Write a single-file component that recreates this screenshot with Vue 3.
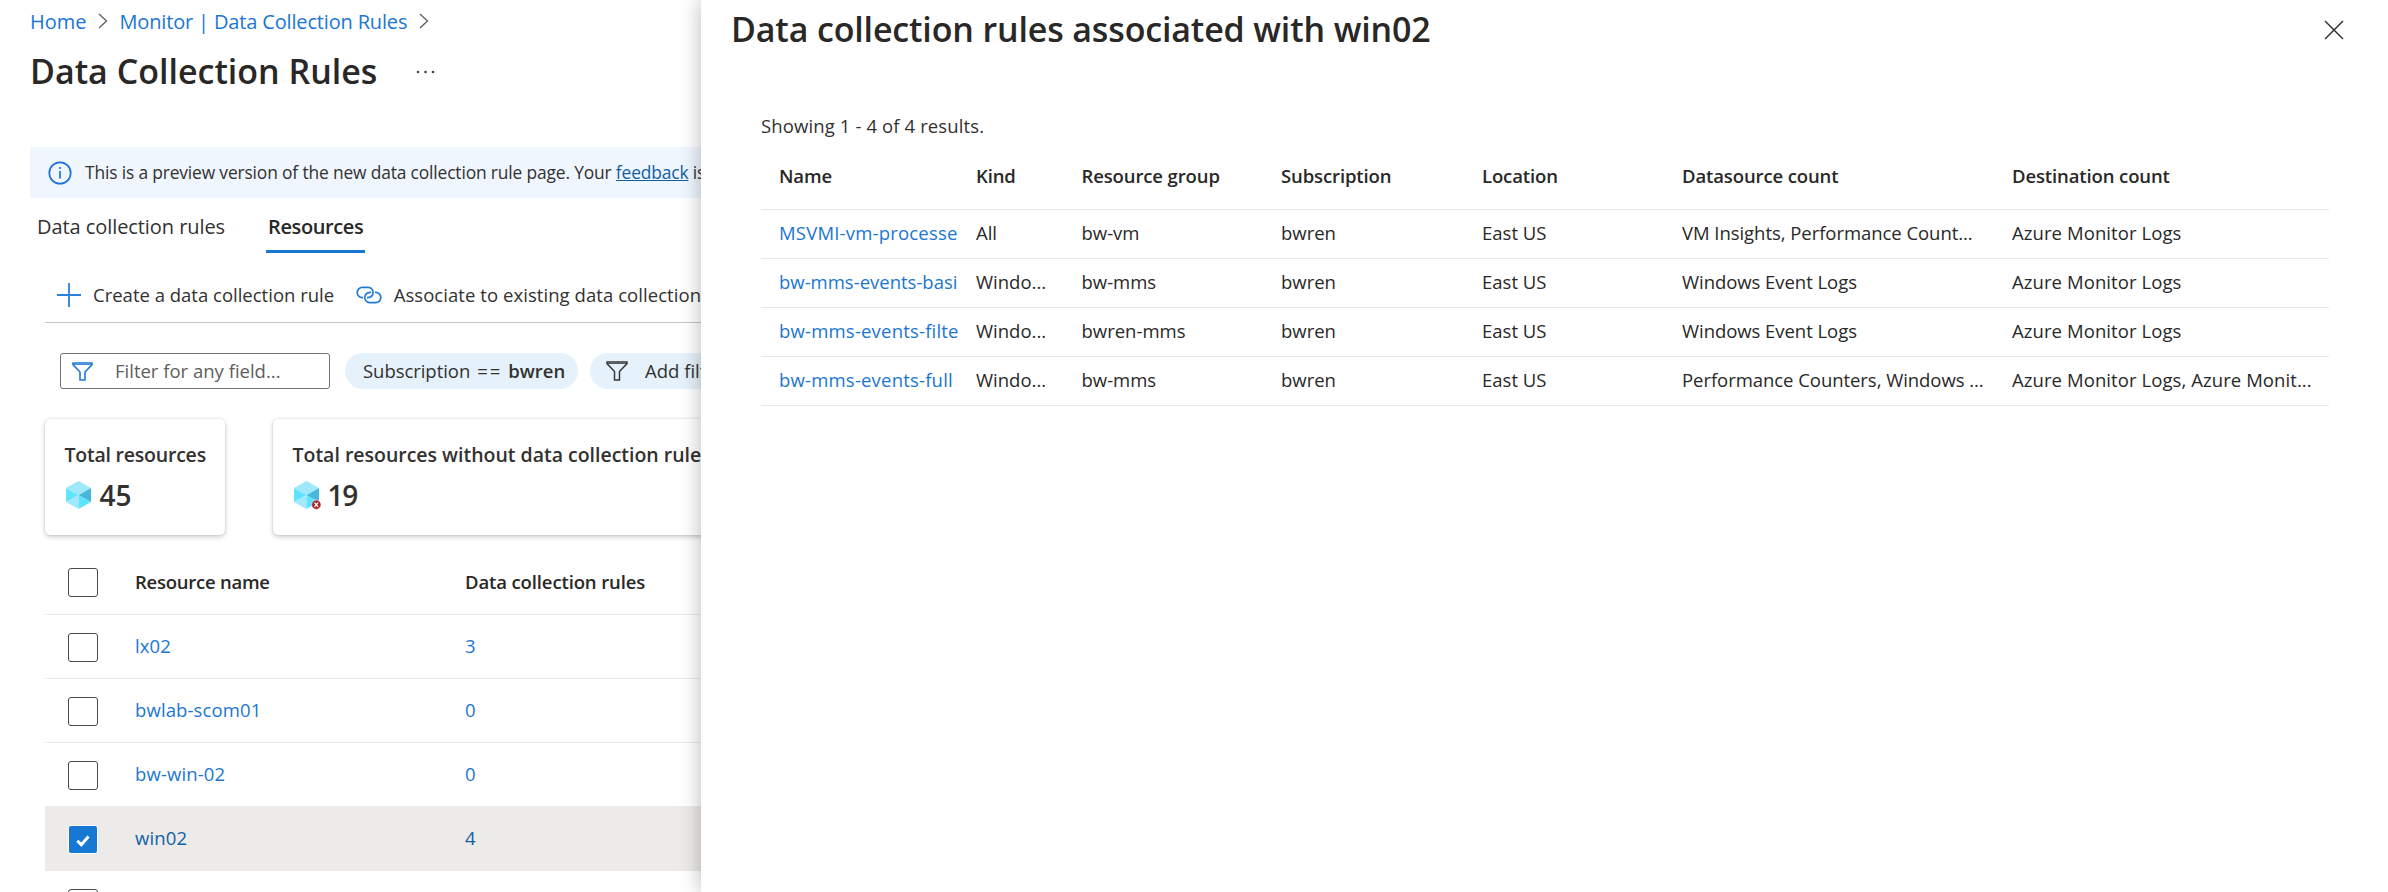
<script setup>
const resources = [
  { name: 'lx02', rules: 3, selected: false },
  { name: 'bwlab-scom01', rules: 0, selected: false },
  { name: 'bw-win-02', rules: 0, selected: false },
  { name: 'win02', rules: 4, selected: true },
  { name: '', rules: '', selected: false },
]

const columns = ['Name', 'Kind', 'Resource group', 'Subscription', 'Location', 'Datasource count', 'Destination count']

const rules = [
  ['MSVMI-vm-processe', 'All', 'bw-vm', 'bwren', 'East US', 'VM Insights, Performance Count...', 'Azure Monitor Logs'],
  ['bw-mms-events-basi', 'Windo...', 'bw-mms', 'bwren', 'East US', 'Windows Event Logs', 'Azure Monitor Logs'],
  ['bw-mms-events-filte', 'Windo...', 'bwren-mms', 'bwren', 'East US', 'Windows Event Logs', 'Azure Monitor Logs'],
  ['bw-mms-events-full', 'Windo...', 'bw-mms', 'bwren', 'East US', 'Performance Counters, Windows ...', 'Azure Monitor Logs, Azure Monit...'],
]
</script>

<template>
  <div class="portal">
    <main class="blade">
      <nav class="crumbs">
        <a>Home</a>
        <svg class="chev" width="10" height="16" viewBox="0 0 10 16"><path d="M1 1l7.5 7L1 15" /></svg>
        <a class="monitor">Monitor | Data Collection Rules</a>
        <svg class="chev" width="10" height="16" viewBox="0 0 10 16"><path d="M1 1l7.5 7L1 15" /></svg>
      </nav>
      <header class="head">
        <h1>Data Collection Rules</h1>
        <svg class="dots" width="20" height="4" viewBox="0 0 20 4"><circle cx="2" cy="2" r="1.3" /><circle cx="9.5" cy="2" r="1.3" /><circle cx="17" cy="2" r="1.3" /></svg>
      </header>

      <div class="banner">
        <svg width="24" height="24" viewBox="0 0 24 24" fill="none" stroke="#1f6fe0" stroke-width="1.7">
          <circle cx="12" cy="12" r="10.7" /><path d="M12 10v7.5" /><circle cx="12" cy="7" r="1.1" fill="#1f6fe0" stroke="none" />
        </svg>
        <span>This is a preview version of the new data collection rule page. Your <a>feedback</a> is</span>
      </div>

      <div class="tabs">
        <span class="tab">Data collection rules</span>
        <span class="tab active">Resources</span>
      </div>

      <div class="toolbar">
        <svg width="24" height="24" viewBox="0 0 24 24" fill="none" stroke="#2a80d6" stroke-width="1.8"><path d="M12 0v24M0 12h24" /></svg>
        <span class="create">Create a data collection rule</span>
        <svg class="link" width="26" height="18" viewBox="0 0 26 18" fill="none" stroke="#1f7bd6" stroke-width="1.7">
          <path d="M7 11.600H6.300A5.100 5.100 0 0 1 6.300 1.400H12.200A5 5 0 0 1 16.600 8.800C15.600 10.800 13.600 11.700 11 11.600" />
          <path d="M19 6.400H19.700A5.100 5.100 0 0 1 19.700 16.600H13.800A5 5 0 0 1 9.400 9.200C10.400 7.200 12.400 6.300 15 6.400" />
        </svg>
        <span class="assoc">Associate to existing data collection</span>
      </div>

      <div class="filters">
        <div class="search">
          <svg width="21" height="19" viewBox="0 0 21 19" fill="none" stroke="#1f7bd6" stroke-width="1.6"><path d="M1 1h19v1.600l-7 7.400v8H8v-8L1 2.600z" /><path d="M1 2.300h19" stroke-width="1" /></svg>
          <span>Filter for any field...</span>
        </div>
        <div class="pill sub"><span>Subscription</span><span class="eq">==</span><b>bwren</b></div>
        <div class="pill add">
          <svg width="22" height="20" viewBox="0 0 22 20" fill="none" stroke="#3b3a39" stroke-width="1.5"><path d="M1 1h20v1.600l-7.500 7.900v8.500h-5v-8.500L1 2.600z" /><path d="M1 2.300h20" stroke-width="1" /></svg>
          <span>Add filter</span>
        </div>
      </div>

      <div class="cards">
        <section class="card">
          <h2>Total resources</h2>
          <div class="figure">
            <svg width="28" height="30" viewBox="0 0 28 30">
              <path d="M13.500 1L26 8 13.500 15.200 1 8z" fill="#9fe9fb" /><path d="M1 8l12.500 7.200L1 22z" fill="#60e3fd" />
              <path d="M26 8v14l-12.500-6.800z" fill="#46b7db" /><path d="M1 22l12.500-6.800V29z" fill="#9fe9fb" /><path d="M26 22l-12.500-6.800V29z" fill="#5fe2fd" />
            </svg>
            <b>45</b>
          </div>
        </section>
        <section class="card wide">
          <h2>Total resources without data collection rule</h2>
          <div class="figure">
            <svg width="28" height="30" viewBox="0 0 28 30">
              <path d="M13.500 1L26 8 13.500 15.200 1 8z" fill="#9fe9fb" /><path d="M1 8l12.500 7.200L1 22z" fill="#60e3fd" />
              <path d="M26 8v14l-12.500-6.800z" fill="#46b7db" /><path d="M1 22l12.500-6.800V29z" fill="#9fe9fb" /><path d="M26 22l-12.500-6.800V29z" fill="#5fe2fd" />
              <circle cx="23.300" cy="24.700" r="4.700" fill="#a4262c" stroke="#fff" stroke-width=".6" />
              <path d="M21.500 22.600l3.600 4.200M25.100 22.600l-3.600 4.200" stroke="#fff" stroke-width="1.300" />
            </svg>
            <b class="tight">19</b>
          </div>
        </section>
      </div>

      <div class="list">
        <div class="lrow lhead">
          <i class="box"></i><span class="res-head">Resource name</span><span class="rules-head">Data collection rules</span>
        </div>
        <div v-for="(r, i) in resources" :key="i" class="lrow" :class="{ selected: r.selected }">
          <i class="box"><svg v-if="r.selected" width="14" height="12" viewBox="0 0 14 12" fill="none" stroke="#fff" stroke-width="3"><path d="M1.300 5.800l4 3.900L12.500 1.500" /></svg></i>
          <a>{{ r.name }}</a><a>{{ r.rules }}</a>
        </div>
      </div>
    </main>

    <aside class="panel">
      <header class="phead">
        <h1>Data collection rules associated with win02</h1>
        <svg width="20" height="20" viewBox="0 0 20 20" fill="none" stroke="#323130" stroke-width="1.500"><path d="M1 1l18 18M19 1L1 19" /></svg>
      </header>
      <p class="count">Showing 1 - 4 of 4 results.</p>
      <div class="grid ghead"><span v-for="c in columns" :key="c"><em>{{ c }}</em></span></div>
      <div v-for="(r, n) in rules" :key="r[0]" class="grid" :class="'r' + n">
        <span v-for="(c, i) in r" :key="i" :class="['c' + i]"><em>{{ c }}</em></span>
      </div>
    </aside>
  </div>
</template>

<style>
body { margin: 0; overflow: hidden; background: #fff; }
</style>

<style scoped>
.portal { display: flex; width: 2388px; height: 892px; overflow: hidden; background: #fff; color: #323130; font: 18.5px "Open Sans", "Noto Sans", sans-serif; white-space: nowrap; }
.portal * { box-sizing: border-box; }
svg { display: block; flex: none; }
h1, h2, p { margin: 0; }
a { color: #1b76d2; }
.blade { width: 701px; flex: none; overflow: hidden; }
.blade > * { margin-left: 30px; }
.crumbs { display: flex; align-items: center; height: 42px; font-size: 20px; }
.monitor { letter-spacing: -.16px; }
.chev { margin: 0 11.5px; fill: none; stroke: #605e5c; stroke-width: 1.3; }
.head { display: flex; align-items: center; height: 57px; }
h1 { font-size: 34px; font-weight: 600; color: #292827; line-height: 57px; }
.head h1 { padding-top: 1px; }
.dots { margin: 3px 0 0 39px; fill: #444; }
.banner { margin-top: 48px; height: 51px; padding-left: 18px; display: flex; align-items: center; gap: 13px; background: #eff6fe; font-size: 17.4px; letter-spacing: -.155px; }
.banner span { padding-bottom: 2px; }
.banner a { color: #115ea3; text-decoration: underline; }
.tabs { display: flex; height: 55px; font-size: 20px; line-height: 58px; padding-left: 7px; gap: 41px; letter-spacing: -.07px; }
.tab.active { font-weight: 600; padding: 0 2px; border-bottom: 3px solid #1778d4; color: #292827; letter-spacing: -.4px; }
.blade > .toolbar { margin-left: 45px; height: 70px; padding: 15px 0 0 12px; border-bottom: 1px solid #c8c6c4; display: flex; align-items: center; }
.toolbar span { padding-bottom: 2px; }
.create { margin: 0 22px 0 12px; }
.link { margin-right: 11.500px; }
.assoc { letter-spacing: .06px; }
.blade > .filters { margin-left: 60px; margin-top: 30px; display: flex; }
.search { flex: none; width: 270px; height: 36px; border: 1px solid #757370; border-radius: 3px; display: flex; align-items: center; padding-left: 11px; gap: 22px; color: #605e5c; }
.search span, .pill span, .pill b { padding-bottom: 1px; }
.pill { flex: none; height: 36px; border-radius: 18px; background: #e6f2fb; display: flex; align-items: center; }
.sub { width: 233px; margin-left: 15px; padding-left: 18px; letter-spacing: -.05px; }
.eq { margin: 0 6px 0 7px; letter-spacing: 2px; }
.add { width: 180px; margin-left: 12px; padding-left: 16px; gap: 17px; }
b { font-weight: 600; }
.blade > .cards { margin-left: 45px; margin-top: 30px; display: flex; gap: 48px; }
.card { flex: none; width: 180px; height: 116px; border-radius: 5px; padding: 22px 0 0 19.500px; box-shadow: 0 2px 5px rgba(0, 0, 0, .2), 0 0 2px rgba(0, 0, 0, .15); }
.card.wide { width: 520px; }
h2 { font-size: 19.500px; line-height: 28px; font-weight: 600; letter-spacing: -.22px; }
.wide h2 { letter-spacing: -.01px; }
.figure { display: flex; align-items: center; height: 36px; margin-top: 8px; gap: 7px; font-size: 28px; }
.tight { letter-spacing: -1.200px; }
.blade > .list { margin-left: 45px; margin-top: 15px; }
.lrow { display: grid; grid-template-columns: 90px 330px 1fr; align-items: center; height: 64px; border-bottom: 1px solid #edebe9; }
.lhead { height: 65px; font-weight: 600; color: #292827; }
.res-head { letter-spacing: -.25px; padding-bottom: 1px; }
.rules-head { letter-spacing: -.12px; padding-bottom: 1px; }
.box { width: 30px; height: 29px; margin-left: 23px; border: 1px solid #4a4947; border-radius: 3px; background: #fff; display: flex; align-items: center; justify-content: center; }
.lrow > .box { margin-top: 1px; }
.lrow a { padding-bottom: 2px; letter-spacing: .12px; }
.selected { background: #edebe9; }
.selected a { color: #1160a8; }
.selected .box { background: #1778d4; border-color: #fff; padding-top: 4px; }
.panel { position: relative; flex: 1; background: #fff; box-shadow: 0 0 20px rgba(0, 0, 0, .28); padding: 0 0 0 30px; }
.phead { display: flex; justify-content: space-between; align-items: center; height: 58px; padding-right: 44px; letter-spacing: -.15px; }
.phead svg { margin-top: 2px; }
.count { margin: 51px 0 0 30px; line-height: 34px; letter-spacing: .12px; }
.grid { display: grid; grid-template-columns: 197px 105.500px 199.500px 201px 200px 330px 1fr; width: 1568px; height: 49px; margin-left: 30px; border-bottom: 1px solid #e8e8e8; align-items: center; color: #292827; }
.grid span { padding-left: 18px; overflow: hidden; }
.grid em { font-style: normal; display: block; overflow: hidden; padding-bottom: 4px; }
.grid .c0 { color: #1b76d2; letter-spacing: .2px; }
.r1 .c0 { letter-spacing: 0; }
.c5 { letter-spacing: -.05px; }
.c6 { letter-spacing: .08px; }
.grid.ghead { height: 67px; font-weight: 600; letter-spacing: -.12px; }
.ghead em { padding-bottom: 2px; }
</style>
